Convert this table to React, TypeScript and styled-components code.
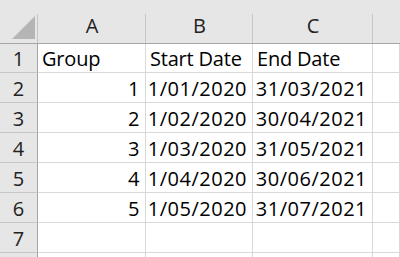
import styled, { createGlobalStyle } from 'styled-components';

const GlobalStyle = createGlobalStyle`
	html, body {
		margin: 0;
		padding: 0;
		background: #ffffff;
		overflow: hidden;
	}
	body {
		font-family: 'Open Sans', 'Noto Sans', sans-serif;
	}
`;

type Row = { group: string; start: string; end: string };

const rows: Row[] = [
	{ group: 'Group', start: 'Start Date', end: 'End Date' },
	{ group: '1', start: '1/01/2020', end: '31/03/2021' },
	{ group: '2', start: '1/02/2020', end: '30/04/2021' },
	{ group: '3', start: '1/03/2020', end: '31/05/2021' },
	{ group: '4', start: '1/04/2020', end: '30/06/2021' },
	{ group: '5', start: '1/05/2020', end: '31/07/2021' },
	{ group: '', start: '', end: '' },
	{ group: '', start: '', end: '' },
];

const rowHeights = [29, 30, 30, 30, 30, 30, 30, 30];

const App = () => {
	return (
		<>
			<GlobalStyle />
			<Sheet>
				<Corner>
					<svg width='24' height='24' viewBox='0 0 24 24'>
						<polygon points='23,0 23,23 0,23' fill='#b5b5b5' />
					</svg>
				</Corner>
				<ColHeader>A</ColHeader>
				<ColHeader>B</ColHeader>
				<ColHeader>C</ColHeader>
				<ColHeader last />

				{rows.map((r, i) => {
					const isText = i === 0;
					// the last row is only a sliver at the bottom edge, its number stays hidden
					const label = i < rows.length - 1 ? i + 1 : '';
					return (
						<RowWrap key={i} h={rowHeights[i]}>
							<RowHeader>{label}</RowHeader>
							<Cell align={isText ? 'left' : 'right'}>{r.group}</Cell>
							<Cell align={isText ? 'left' : 'right'}>{r.start}</Cell>
							<Cell align={isText ? 'left' : 'right'}>{r.end}</Cell>
							<Cell align='left' />
						</RowWrap>
					);
				})}
			</Sheet>
		</>
	);
};

export default App;

const Sheet = styled.div`
	width: 400px;
	height: 257px;
	overflow: hidden;
	display: grid;
	grid-template-columns: 38px 108px 107px 120px 1fr;
	grid-auto-rows: min-content;
	color: #000000;
`;

const Corner = styled.div`
	height: 44px;
	box-sizing: border-box;
	background: #e6e6e6;
	border-bottom: 1px solid #a5a5a5;
	position: relative;
	display: flex;
	align-items: flex-end;
	justify-content: flex-end;
	padding: 0 2px 3px 0;

	svg {
		display: block;
	}

	&::after {
		content: '';
		position: absolute;
		top: 14px;
		bottom: 0;
		right: 0;
		width: 1px;
		background: #c6c6c6;
	}
`;

const ColHeader = styled.div<{ last?: boolean }>`
	height: 44px;
	box-sizing: border-box;
	background: #e6e6e6;
	border-bottom: 1px solid #a5a5a5;
	position: relative;
	display: flex;
	align-items: flex-end;
	justify-content: center;
	padding-bottom: 3px;
	font-size: 20px;
	line-height: 28px;
	color: #222222;

	&::after {
		content: '';
		position: absolute;
		top: 14px;
		bottom: 0;
		right: 0;
		width: 1px;
		background: ${(p) => (p.last ? 'transparent' : '#c6c6c6')};
	}
`;

const RowWrap = styled.div<{ h: number }>`
	display: contents;

	& > div {
		height: ${(p) => p.h}px;
	}
`;

const RowHeader = styled.div`
	box-sizing: border-box;
	background: #e6e6e6;
	border-right: 1px solid #a5a5a5;
	border-bottom: 1px solid #c6c6c6;
	display: flex;
	align-items: center;
	justify-content: center;
	font-size: 20px;
	color: #222222;
	padding-top: 1px;
`;

const Cell = styled.div<{ align: 'left' | 'right' }>`
	box-sizing: border-box;
	border-right: 1px solid #d9d9d9;
	border-bottom: 1px solid #d9d9d9;
	display: flex;
	align-items: center;
	justify-content: ${(p) => (p.align === 'right' ? 'flex-end' : 'flex-start')};
	padding: 1px 5px 0 4px;
	font-size: 20px;
	letter-spacing: ${(p) => (p.align === 'right' ? '0.5px' : '-0.2px')};
	white-space: nowrap;
	overflow: hidden;
	color: #000000;
`;
